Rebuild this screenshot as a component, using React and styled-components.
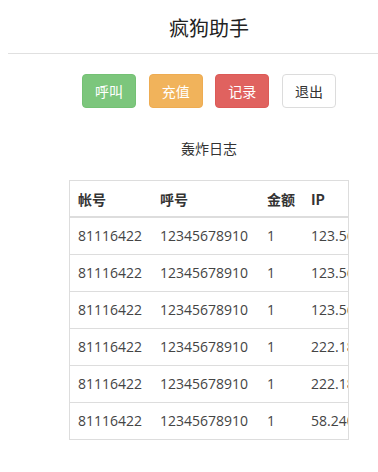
import React from "react";
import styled, { createGlobalStyle } from "styled-components";

const Global = createGlobalStyle`
  html, body { margin: 0; padding: 0; background: #fff; overflow: hidden; }
  body {
    font-family: "Open Sans", "Noto Sans CJK SC", sans-serif;
    font-size: 14px;
    color: #333;
  }
`;

const Page = styled.div`
  width: 402px;
  padding: 0 8px;
`;

const Title = styled.h1`
  margin: 0;
  padding-top: 14px;
  height: 39px;
  line-height: 28px;
  font-size: 20px;
  font-weight: normal;
  text-align: center;
  font-family: "Noto Sans CJK SC", sans-serif;
  color: #222;
`;

const Rule = styled.hr`
  margin: 0;
  border: 0;
  border-top: 1px solid #e0e0e0;
`;

const Actions = styled.div`
  display: flex;
  justify-content: center;
  gap: 12.7px;
  margin-top: 20px;
`;

const colors = {
  green: { bg: "#7cc67c", border: "#74c174", fg: "#fff" },
  orange: { bg: "#f1b35b", border: "#eeac52", fg: "#fff" },
  red: { bg: "#e0625f", border: "#dc5a57", fg: "#fff" },
  plain: { bg: "#fff", border: "#dcdcdc", fg: "#333" },
};

const Button = styled.button`
  width: 54px;
  height: 34px;
  padding: 0;
  border-radius: 4px;
  border: 1px solid ${(p) => colors[p.$tone].border};
  background: ${(p) => colors[p.$tone].bg};
  color: ${(p) => colors[p.$tone].fg};
  font-family: "Noto Sans CJK SC", sans-serif;
  font-size: 14px;
  cursor: pointer;
`;

const SectionTitle = styled.div`
  margin-top: 30px;
  text-align: center;
  line-height: 20px;
  font-family: "Noto Sans CJK SC", sans-serif;
`;

const TableBox = styled.div`
  width: 278px;
  margin: 22px auto 0;
  border: 1px solid #dddddd;
  overflow: hidden;
`;

const Table = styled.table`
  table-layout: fixed;
  width: 380px;
  border-collapse: collapse;
  border-spacing: 0;
`;

const Th = styled.th`
  text-align: left;
  font-weight: bold;
  padding: 8px 8px 7px;
  line-height: 20px;
  border-bottom: 2px solid #dddddd;
  white-space: nowrap;
  font-family: "Noto Sans CJK SC", sans-serif;
`;

const Td = styled.td`
  padding: 8px;
  line-height: 20px;
  border-top: 1px solid #dddddd;
  white-space: nowrap;
  overflow: hidden;
  color: #444;
  tr:first-child > & { border-top: 0; }
`;

const rows = [
  ["81116422", "12345678910", "1", "123.56.78.90"],
  ["81116422", "12345678910", "1", "123.56.78.90"],
  ["81116422", "12345678910", "1", "123.56.78.90"],
  ["81116422", "12345678910", "1", "222.18.4.101"],
  ["81116422", "12345678910", "1", "222.18.4.101"],
  ["81116422", "12345678910", "1", "58.240.1.9"],
];

export default function App() {
  return (
    <Page>
      <Global />
      <Title>疯狗助手</Title>
      <Rule />
      <Actions>
        <Button $tone="green">呼叫</Button>
        <Button $tone="orange">充值</Button>
        <Button $tone="red">记录</Button>
        <Button $tone="plain">退出</Button>
      </Actions>
      <SectionTitle>轰炸日志</SectionTitle>
      <TableBox>
        <Table>
          <colgroup>
            <col style={{ width: 82 }} />
            <col style={{ width: 107 }} />
            <col style={{ width: 44 }} />
            <col style={{ width: 147 }} />
          </colgroup>
          <thead>
            <tr>
              <Th>帐号</Th>
              <Th>呼号</Th>
              <Th>金额</Th>
              <Th>IP</Th>
            </tr>
          </thead>
          <tbody>
            {rows.map((r, i) => (
              <tr key={i}>
                {r.map((c, j) => (
                  <Td key={j}>{c}</Td>
                ))}
              </tr>
            ))}
          </tbody>
        </Table>
      </TableBox>
    </Page>
  );
}
